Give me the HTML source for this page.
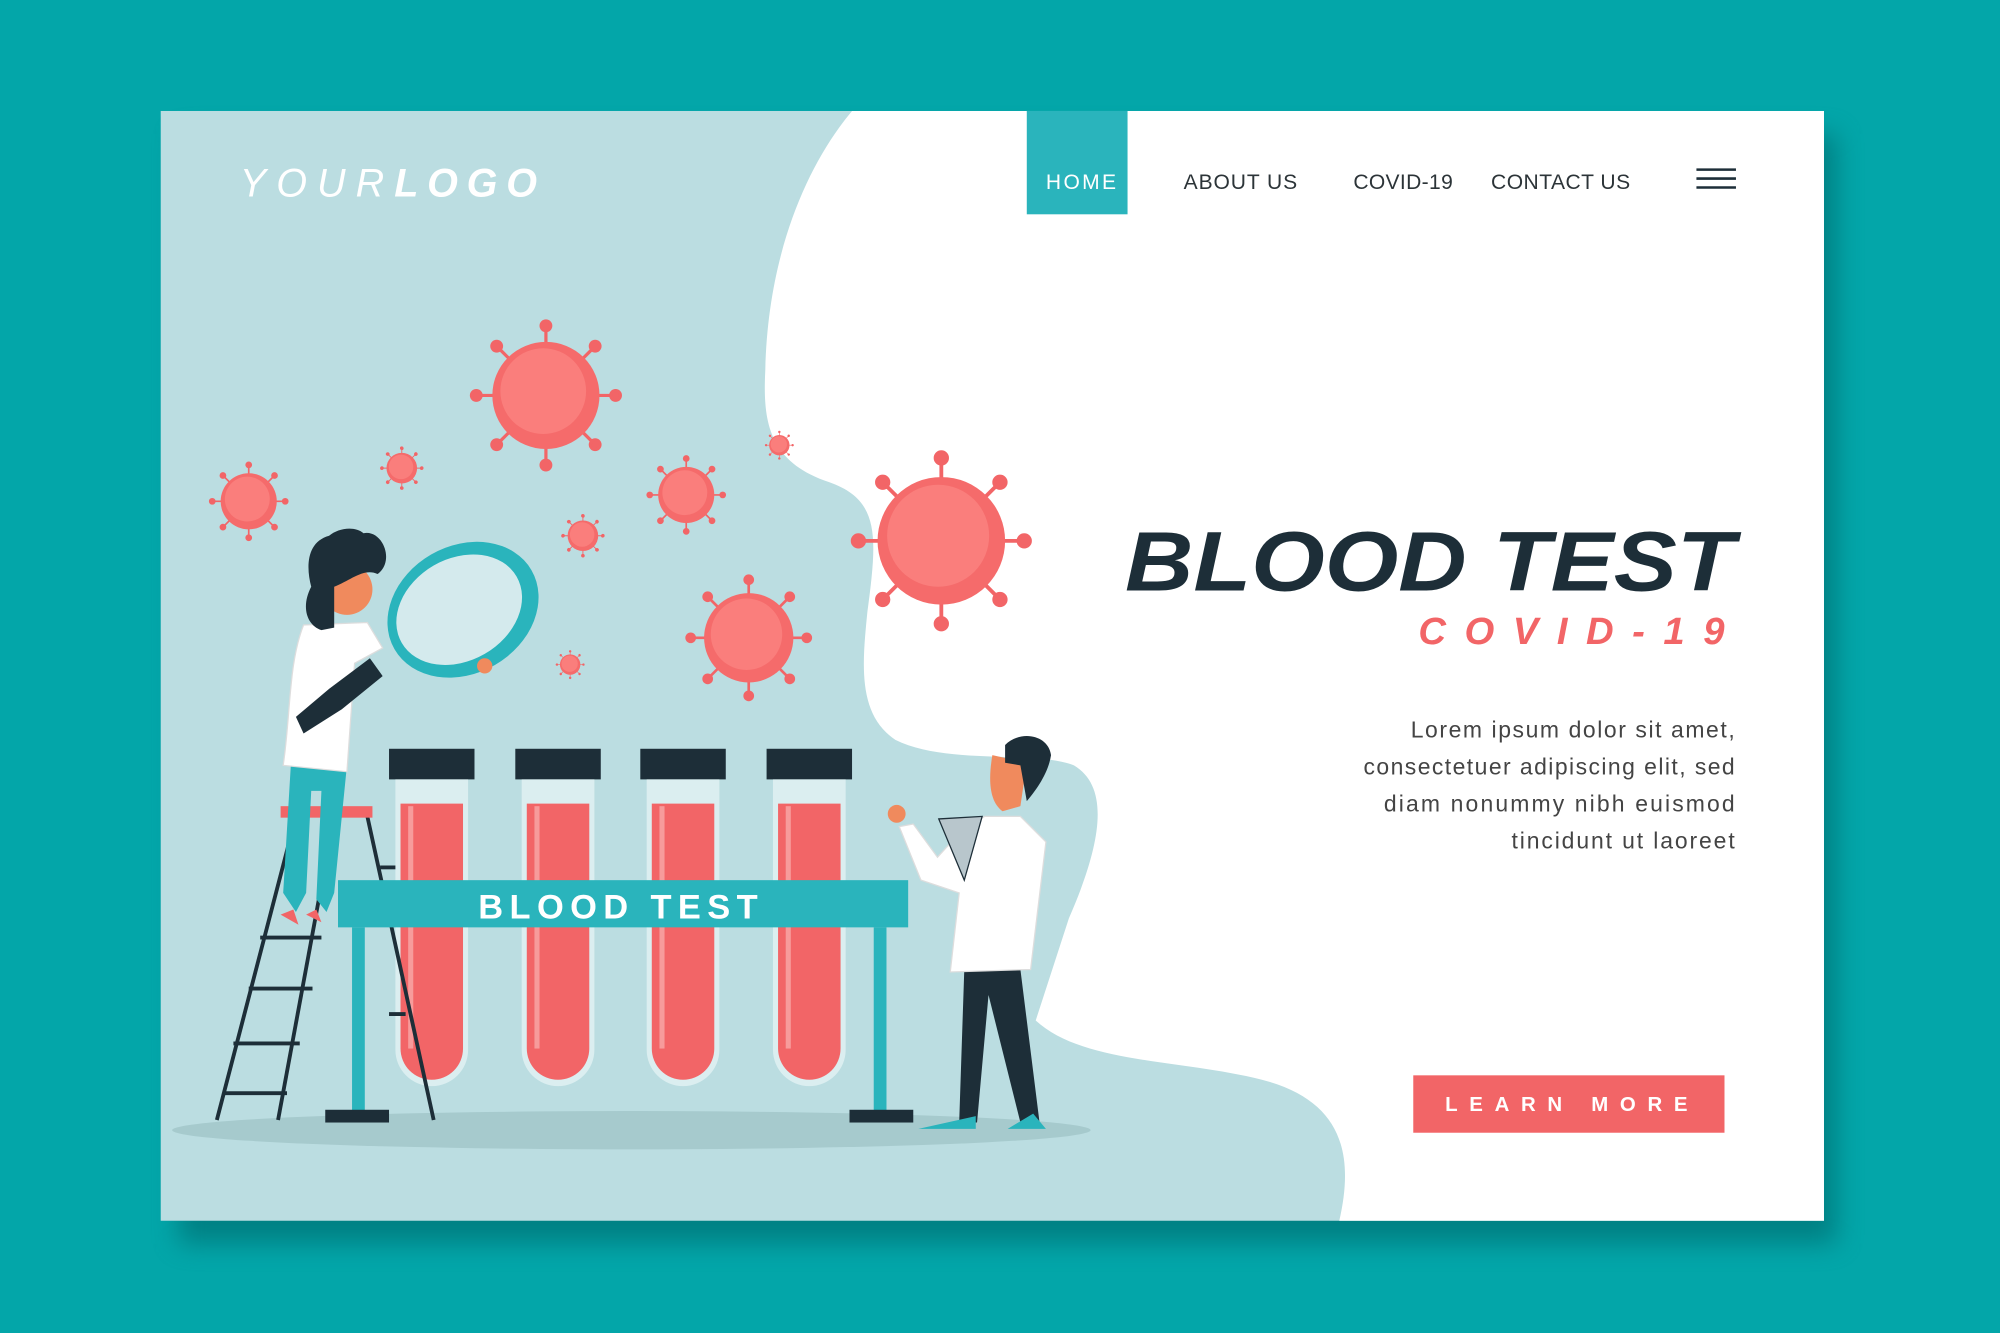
<!DOCTYPE html>
<html><head><meta charset="utf-8"><style>
html,body{margin:0;padding:0;background:#03a6a9;}
svg{display:block}
</style></head><body>
<svg width="2000" height="1333" viewBox="0 0 1568 1045" preserveAspectRatio="none" xmlns="http://www.w3.org/2000/svg">
<defs>
<filter id="sh" x="-10%" y="-10%" width="120%" height="130%"><feGaussianBlur stdDeviation="10"/></filter>
<g id="virus">
 <g stroke="#f26567" stroke-width="0.06" fill="#f26567">
  <g><line x1="0" y1="0" x2="0" y2="-1.3"/><circle cx="0" cy="-1.3" r="0.09"/></g>
  <g transform="rotate(45)"><line x1="0" y1="0" x2="0" y2="-1.3"/><circle cx="0" cy="-1.3" r="0.09"/></g>
  <g transform="rotate(90)"><line x1="0" y1="0" x2="0" y2="-1.3"/><circle cx="0" cy="-1.3" r="0.09"/></g>
  <g transform="rotate(135)"><line x1="0" y1="0" x2="0" y2="-1.3"/><circle cx="0" cy="-1.3" r="0.09"/></g>
  <g transform="rotate(180)"><line x1="0" y1="0" x2="0" y2="-1.3"/><circle cx="0" cy="-1.3" r="0.09"/></g>
  <g transform="rotate(225)"><line x1="0" y1="0" x2="0" y2="-1.3"/><circle cx="0" cy="-1.3" r="0.09"/></g>
  <g transform="rotate(270)"><line x1="0" y1="0" x2="0" y2="-1.3"/><circle cx="0" cy="-1.3" r="0.09"/></g>
  <g transform="rotate(315)"><line x1="0" y1="0" x2="0" y2="-1.3"/><circle cx="0" cy="-1.3" r="0.09"/></g>
 </g>
 <circle r="1" fill="#f56b6b"/>
 <circle r="0.8" cx="-0.05" cy="-0.08" fill="#fa7e7c"/>
</g>
</defs>
<rect width="1568" height="1045" fill="#03a6a9"/>
<rect x="140" y="105" width="1300" height="870" fill="#01777a" opacity="0.8" filter="url(#sh)"/>
<rect x="126" y="87" width="1304" height="870" fill="#bbdde1"/>
<path d="M668,87 L1430,87 L1430,957 L1050,957 C1062,905 1052,865 995,848 C930,830 850,835 812,800 L838,720 C862,665 872,618 842,600 C812,588 742,600 702,580 C672,560 676,520 680,480 C688,420 690,392 650,378 C602,362 598,330 600,290 C602,200 632,130 668,87 Z" fill="#fff"/>
<!-- nav -->
<rect x="805" y="87" width="79" height="81" fill="#2ab4bc"/>
<g font-family="Liberation Sans, sans-serif" font-size="16.5" fill="#2c3438">
<text x="820" y="148" fill="#fff" textLength="55">HOME</text>
<text x="928" y="148" textLength="89">ABOUT US</text>
<text x="1061" y="148" textLength="78">COVID-19</text>
<text x="1169" y="148" textLength="109">CONTACT US</text>
</g>
<g stroke="#1d2e38" stroke-width="2"><line x1="1330" y1="133" x2="1361" y2="133"/><line x1="1330" y1="140" x2="1361" y2="140"/><line x1="1330" y1="147" x2="1361" y2="147"/></g>
<text x="188" y="154" font-family="Liberation Sans, sans-serif" font-size="31" fill="#fff" letter-spacing="5" font-style="italic" textLength="237">YOUR<tspan font-weight="bold" letter-spacing="4">LOGO</tspan></text>
<!-- headings -->
<text x="882" y="463" font-family="Liberation Sans, sans-serif" font-size="66" font-weight="bold" font-style="italic" fill="#1d2e38" textLength="478" lengthAdjust="spacingAndGlyphs">BLOOD TEST</text>
<text x="1112" y="505" font-family="Liberation Sans, sans-serif" font-size="30" font-weight="bold" font-style="italic" fill="#f26567" textLength="240">COVID-19</text>
<g font-family="Liberation Sans, sans-serif" font-size="18" fill="#444">
<text x="1106" y="578" textLength="254">Lorem ipsum dolor sit amet,</text>
<text x="1069" y="607" textLength="291">consectetuer adipiscing elit, sed</text>
<text x="1085" y="636" textLength="275">diam nonummy nibh euismod</text>
<text x="1185" y="665" textLength="175">tincidunt ut laoreet</text>
</g>
<rect x="1108" y="843" width="244" height="45" fill="#f26567"/>
<text x="1133" y="871" font-family="Liberation Sans, sans-serif" font-size="16" font-weight="bold" fill="#fff" textLength="190">LEARN MORE</text>
<!-- viruses -->
<use href="#virus" transform="translate(428,310) scale(42)"/>
<use href="#virus" transform="translate(195,393) scale(22)"/>
<use href="#virus" transform="translate(315,367) scale(12)"/>
<use href="#virus" transform="translate(538,388) scale(22)"/>
<use href="#virus" transform="translate(457,420) scale(12)"/>
<use href="#virus" transform="translate(611,349) scale(8)"/>
<use href="#virus" transform="translate(738,424) scale(50)"/>
<use href="#virus" transform="translate(587,500) scale(35)"/>
<use href="#virus" transform="translate(447,521) scale(8)"/>
<!-- floor shadow -->
<ellipse cx="495" cy="886" rx="360" ry="15" fill="#a6cacd"/>
<!-- tubes -->
<g>
 <g id="tube">
  <rect x="305" y="587" width="67" height="24" fill="#1d2e38"/>
  <path d="M310,611 h57 v212 a28.5,28.5 0 0 1 -57,0 z" fill="#dbeef0"/>
  <path d="M314,630 h49 v192 a24.5,24.5 0 0 1 -49,0 z" fill="#f26567"/>
  <rect x="320" y="632" width="4" height="190" fill="#f79b9b"/>
 </g>
 <use href="#tube" x="99"/><use href="#tube" x="197"/><use href="#tube" x="296"/>
</g>
<!-- ladder -->
<g stroke="#1d2e38" stroke-width="3">
 <line x1="232" y1="640" x2="170" y2="878"/><line x1="262" y1="640" x2="218" y2="878"/>
 <line x1="288" y1="640" x2="340" y2="878"/>
 <line x1="204" y1="735" x2="252" y2="735"/><line x1="195" y1="775" x2="245" y2="775"/>
 <line x1="183" y1="818" x2="235" y2="818"/><line x1="175" y1="857" x2="225" y2="857"/>
 <line x1="298" y1="680" x2="310" y2="680"/><line x1="305" y1="795" x2="318" y2="795"/>
</g>
<rect x="220" y="632" width="72" height="9" fill="#f26567"/>
<!-- sign -->
<rect x="276" y="727" width="10" height="148" fill="#2ab4bc"/>
<rect x="685" y="727" width="10" height="148" fill="#2ab4bc"/>
<rect x="255" y="870" width="50" height="10" fill="#1d2e38"/>
<rect x="666" y="870" width="50" height="10" fill="#1d2e38"/>
<rect x="265" y="690" width="447" height="37" fill="#2ab4bc"/>
<text x="375" y="720" font-family="Liberation Sans, sans-serif" font-size="27" font-weight="bold" fill="#fff" textLength="219">BLOOD TEST</text>
<!-- woman -->
<path d="M228,600 L222,700 L232,715 L240,700 L244,620 L252,620 L248,705 L256,715 L262,700 L272,600 Z" fill="#2ab4bc"/>
<path d="M220,717 l14,8 l-4,-12z M240,717 l12,6 l-4,-10z" fill="#f26567"/>
<path d="M238,490 C226,520 228,560 222,600 L272,605 L278,520 L300,508 L288,488 Z" fill="#fff" stroke="#ddd"/>
<path d="M258,540 L232,562 L238,575 L268,556 L300,530 L290,516 Z" fill="#1d2e38"/>
<circle cx="272" cy="462" r="20" fill="#f08a5d"/>
<path d="M258,420 C240,425 240,445 244,460 C236,475 240,490 252,494 L262,492 L262,460 C275,455 285,445 296,450 C310,440 300,415 285,418 C278,412 265,414 258,420 Z" fill="#1d2e38"/>
<ellipse cx="363" cy="478" rx="62" ry="50" transform="rotate(-30 363 478)" fill="#2ab4bc"/>
<ellipse cx="360" cy="478" rx="52" ry="40" transform="rotate(-30 360 478)" fill="#d4eaed"/>
<circle cx="380" cy="522" r="6" fill="#f08a5d"/>
<!-- man -->
<path d="M756,760 L752,880 L766,880 L775,780 L800,880 L815,880 L800,760 Z" fill="#1d2e38"/>
<path d="M720,885 l45,0 l0,-10 z M790,885 l30,0 l-10,-12 z" fill="#2ab4bc"/>
<path d="M772,640 L800,640 L820,660 L808,760 L745,762 L752,700 L722,690 L705,648 L716,646 L735,672 L755,650 Z" fill="#fff" stroke="#ddd"/>
<path d="M736,642 L770,640 L756,690 Z" fill="#b8c6cc" stroke="#1d2e38"/>
<circle cx="703" cy="638" r="7" fill="#f08a5d"/>
<path d="M778,592 C775,610 775,628 786,636 L800,632 L805,598 Z" fill="#f08a5d"/>
<path d="M788,584 C800,572 822,576 824,592 C822,606 812,620 805,628 L800,600 L788,598 Z" fill="#1d2e38"/>
</svg>
</body></html>
